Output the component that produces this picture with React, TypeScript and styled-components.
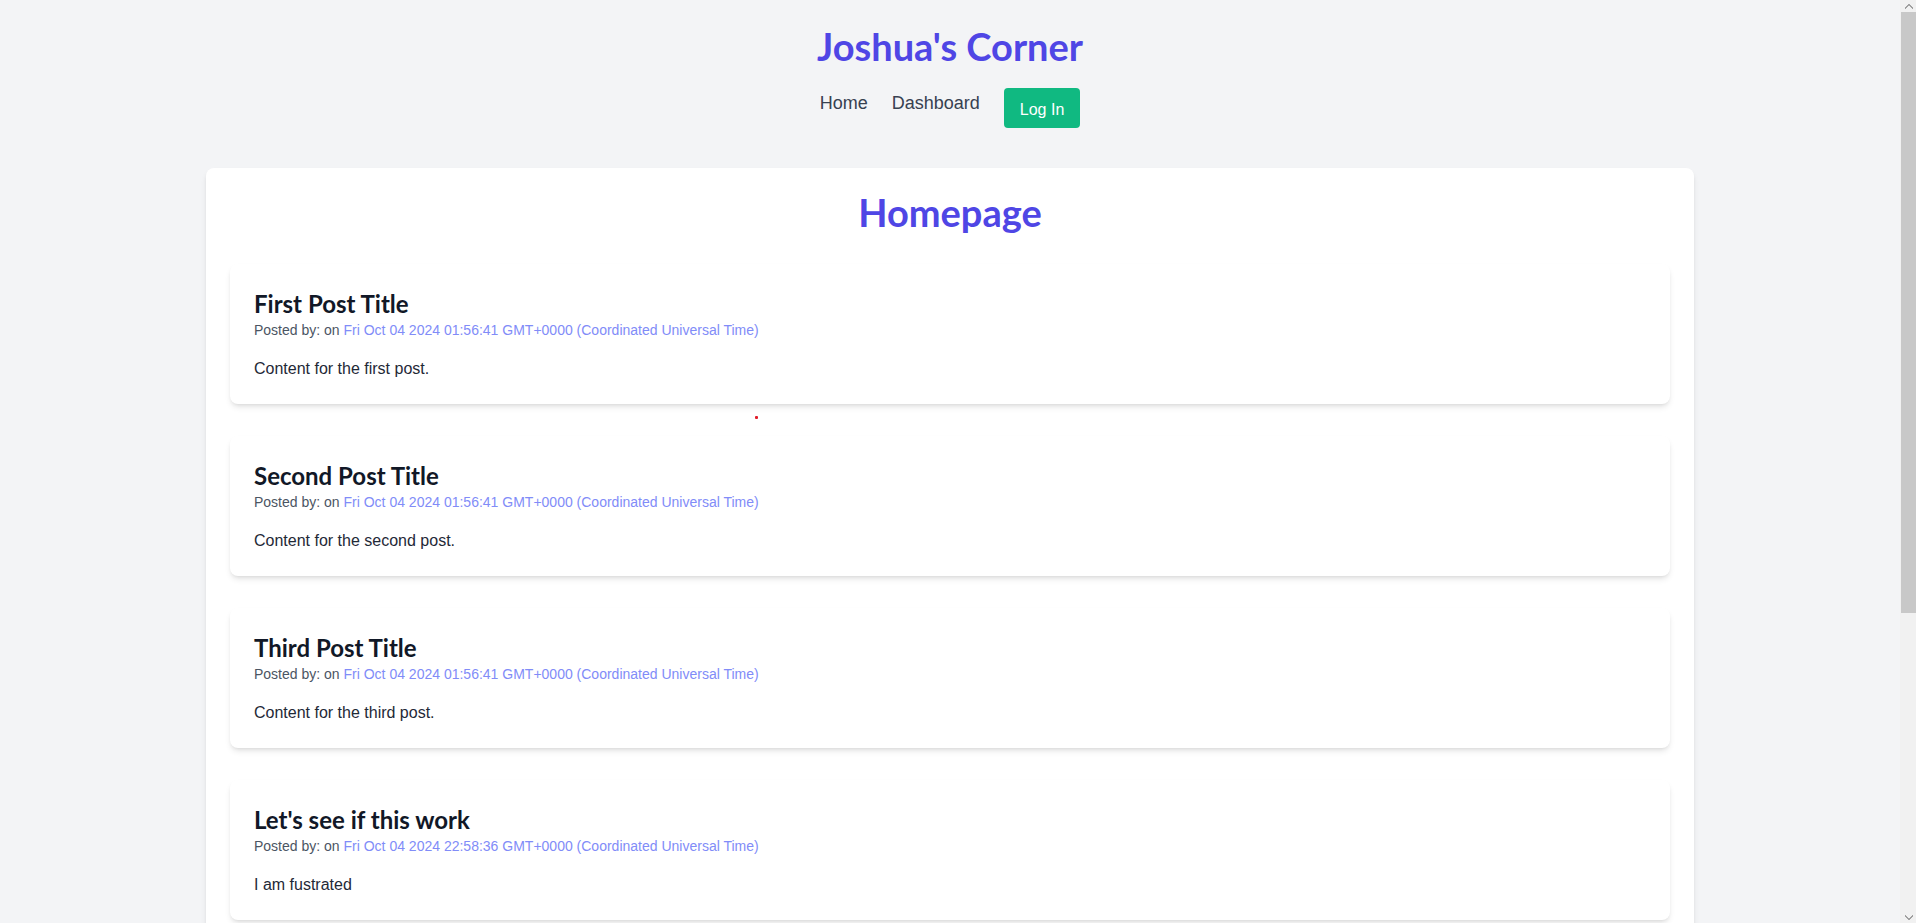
import React from "react";
import styled, { createGlobalStyle } from "styled-components";

const GlobalStyle = createGlobalStyle`
  html, body {
    margin: 0;
    padding: 0;
    background: #f3f4f6;
    overflow: hidden;
  }
  body {
    font-family: "Segoe UI", "Liberation Sans", Arial, sans-serif;
    color: #1f2937;
  }
  * { box-sizing: border-box; }
`;

const Frame = styled.div`
  display: flex;
  height: 100vh;
  overflow: hidden;
`;

const Viewport = styled.div`
  flex: 1;
  min-width: 0;
  overflow: hidden;
`;

const Scrollbar = styled.div`
  width: 16px;
  flex: none;
  background: #f1f1f1;
  display: flex;
  flex-direction: column;
  align-items: flex-end;
`;

const ScrollArrow = styled.div`
  width: 15px;
  height: 12px;
  display: flex;
  align-items: center;
  justify-content: center;
`;

const Thumb = styled.div`
  width: 15px;
  height: 601px;
  background: #c8c8c8;
`;

const Spacer = styled.div`
  flex: 1;
`;

const Header = styled.header`
  padding: 26px 0 16px;
  text-align: center;
`;

const headingFont = `"Segoe UI", Lato, "Liberation Sans", sans-serif`;

const SiteTitle = styled.h1`
  margin: 0 0 22px;
  font-family: ${headingFont};
  font-size: 38px;
  line-height: 40px;
  font-weight: 700;
  color: #4f46e5;
`;

const Nav = styled.nav`
  display: flex;
  justify-content: center;
  gap: 24px;
`;

const NavLink = styled.a`
  padding-top: 1px;
  font-size: 18px;
  line-height: 28px;
  color: #374151;
  text-decoration: none;
  cursor: pointer;
`;

const LoginButton = styled.button`
  font-family: inherit;
  font-size: 16px;
  line-height: 24px;
  padding: 10px 16px 6px;
  border: none;
  border-radius: 4px;
  background: #10b981;
  color: #ffffff;
  cursor: pointer;
`;

const Container = styled.main`
  max-width: 1536px;
  margin: 0 auto;
  padding: 24px;
`;

const MainCard = styled.section`
  position: relative;
  background: #ffffff;
  border-radius: 8px;
  padding: 24px;
  box-shadow: 0 4px 6px -1px rgba(0, 0, 0, 0.1), 0 2px 4px -2px rgba(0, 0, 0, 0.1);
`;

const PageHeading = styled.h2`
  margin: 0 0 32px;
  text-align: center;
  font-family: ${headingFont};
  font-size: 38px;
  line-height: 40px;
  font-weight: 700;
  color: #4f46e5;
`;

const PostList = styled.div`
  display: flex;
  flex-direction: column;
  gap: 32px;
`;

const PostCard = styled.article`
  background: #ffffff;
  border-radius: 8px;
  padding: 24px 24px 23px;
  box-shadow: 0 4px 6px -1px rgba(0, 0, 0, 0.1), 0 2px 4px -2px rgba(0, 0, 0, 0.1);
`;

const PostTitle = styled.h3`
  margin: 0;
  font-family: ${headingFont};
  font-size: 24px;
  line-height: 32px;
  font-weight: 700;
  color: #111827;
`;

const Meta = styled.p`
  margin: 0;
  font-size: 14px;
  line-height: 20px;
  color: #4b5563;
`;

const DateText = styled.span`
  color: #818cf8;
`;

const Body = styled.p`
  margin: 17px 0 0;
  font-size: 16px;
  line-height: 24px;
  color: #1f2937;
`;

const Marker = styled.span`
  position: absolute;
  left: 549px;
  top: 248px;
  width: 3px;
  height: 3px;
  background: #e11d2a;
  border-radius: 1px;
`;

const posts = [
  { title: "First Post Title", date: "Fri Oct 04 2024 01:56:41 GMT+0000 (Coordinated Universal Time)", content: "Content for the first post." },
  { title: "Second Post Title", date: "Fri Oct 04 2024 01:56:41 GMT+0000 (Coordinated Universal Time)", content: "Content for the second post." },
  { title: "Third Post Title", date: "Fri Oct 04 2024 01:56:41 GMT+0000 (Coordinated Universal Time)", content: "Content for the third post." },
  { title: "Let's see if this work", date: "Fri Oct 04 2024 22:58:36 GMT+0000 (Coordinated Universal Time)", content: "I am fustrated" },
  { title: "Another try", date: "Fri Oct 04 2024 23:05:12 GMT+0000 (Coordinated Universal Time)", content: "Testing again." },
  { title: "Testing posts", date: "Sat Oct 05 2024 00:12:44 GMT+0000 (Coordinated Universal Time)", content: "Hopefully this one works." },
];

const Chevron = ({ down }: { down?: boolean }) => (
  <svg width="8" height="5" viewBox="0 0 8 5">
    <path
      d={down ? "M0 0 L4 4 L8 0 L8 1 L4 5 L0 1 Z" : "M0 5 L4 1 L8 5 L8 4 L4 0 L0 4 Z"}
      fill="#505050"
    />
  </svg>
);

export default function App() {
  return (
    <>
      <GlobalStyle />
      <Frame>
        <Viewport>
          <Header>
            <SiteTitle>Joshua's Corner</SiteTitle>
            <Nav>
              <NavLink>Home</NavLink>
              <NavLink>Dashboard</NavLink>
              <LoginButton>Log In</LoginButton>
            </Nav>
          </Header>
          <Container>
            <MainCard>
              <PageHeading>Homepage</PageHeading>
              <PostList>
                {posts.map((p, i) => (
                  <PostCard key={i}>
                    <PostTitle>{p.title}</PostTitle>
                    <Meta>
                      Posted by: on <DateText>{p.date}</DateText>
                    </Meta>
                    <Body>{p.content}</Body>
                  </PostCard>
                ))}
              </PostList>
              <Marker />
            </MainCard>
          </Container>
        </Viewport>
        <Scrollbar>
          <ScrollArrow>
            <Chevron />
          </ScrollArrow>
          <Thumb />
          <Spacer />
          <ScrollArrow>
            <Chevron down />
          </ScrollArrow>
        </Scrollbar>
      </Frame>
    </>
  );
}
